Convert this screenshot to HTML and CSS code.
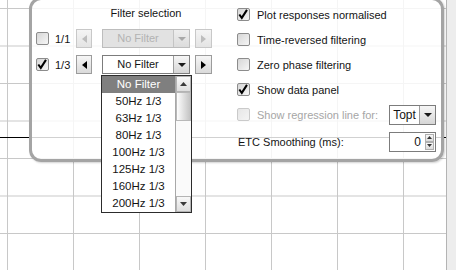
FILE: index.html
```html
<!DOCTYPE html>
<html lang="en">
<head>
  <meta charset="UTF-8">
  <title>Filter panel</title>
  <link rel="stylesheet" href="styles.css">
</head>
<body>
  <div class="screen">
    <div class="plot">
      <div class="panel">

        <div class="filters">
          <div class="filters-title">Filter selection</div>

          <div class="filter-row">
            <span class="check"></span>
            <span class="filter-label">1/1</span>
            <span class="step disabled">
              <svg width="5" height="8" viewBox="0 0 5 8"><path d="M5 0L0 4L5 8Z"/></svg>
            </span>
            <div class="combo disabled">
              <span class="combo-text">No Filter</span>
              <span class="combo-arrow">
                <svg width="8" height="4" viewBox="0 0 8 4"><path d="M0 0H8L4 4Z"/></svg>
              </span>
            </div>
            <span class="step next disabled">
              <svg width="5" height="8" viewBox="0 0 5 8"><path d="M0 0L5 4L0 8Z"/></svg>
            </span>
          </div>

          <div class="filter-row">
            <span class="check">
              <svg width="13" height="13" viewBox="0 0 13 13"><path d="M2.5 6.5L5.2 10.2L10.8 1.5" /></svg>
            </span>
            <span class="filter-label">1/3</span>
            <span class="step">
              <svg width="5" height="8" viewBox="0 0 5 8"><path d="M5 0L0 4L5 8Z"/></svg>
            </span>
            <div class="combo">
              <span class="combo-text">No Filter</span>
              <span class="combo-arrow">
                <svg width="8" height="4" viewBox="0 0 8 4"><path d="M0 0H8L4 4Z"/></svg>
              </span>
            </div>
            <span class="step next">
              <svg width="5" height="8" viewBox="0 0 5 8"><path d="M0 0L5 4L0 8Z"/></svg>
            </span>

            <div class="dropdown">
              <ul class="dropdown-items">
                <li class="selected">No Filter</li>
                <li>50Hz 1/3</li>
                <li>63Hz 1/3</li>
                <li>80Hz 1/3</li>
                <li>100Hz 1/3</li>
                <li>125Hz 1/3</li>
                <li>160Hz 1/3</li>
                <li>200Hz 1/3</li>
              </ul>
              <div class="list-scroll">
                <span class="scroll-btn">
                  <svg width="7" height="4" viewBox="0 0 7 4"><path d="M0 4L3.5 0L7 4Z"/></svg>
                </span>
                <span class="scroll-thumb"></span>
                <span class="scroll-track"></span>
                <span class="scroll-btn">
                  <svg width="7" height="4" viewBox="0 0 7 4"><path d="M0 0H7L3.5 4Z"/></svg>
                </span>
              </div>
            </div>
          </div>
        </div>

        <div class="options">
          <div class="opt">
            <span class="check">
              <svg width="13" height="13" viewBox="0 0 13 13"><path d="M2.5 6.5L5.2 10.2L10.8 1.5" /></svg>
            </span>
            <span class="opt-label">Plot responses normalised</span>
          </div>
          <div class="opt">
            <span class="check"></span>
            <span class="opt-label">Time-reversed filtering</span>
          </div>
          <div class="opt">
            <span class="check"></span>
            <span class="opt-label">Zero phase filtering</span>
          </div>
          <div class="opt">
            <span class="check">
              <svg width="13" height="13" viewBox="0 0 13 13"><path d="M2.5 6.5L5.2 10.2L10.8 1.5" /></svg>
            </span>
            <span class="opt-label">Show data panel</span>
          </div>
          <div class="opt">
            <span class="check disabled"></span>
            <span class="opt-label disabled">Show regression line for:</span>
            <div class="combo small">
              <span class="combo-text">Topt</span>
              <span class="combo-arrow">
                <svg width="8" height="4" viewBox="0 0 8 4"><path d="M0 0H8L4 4Z"/></svg>
              </span>
            </div>
          </div>
          <div class="opt etc">
            <span class="etc-label">ETC Smoothing (ms):</span>
            <div class="spinner">
              <span class="spinner-value">0</span>
              <span class="spinner-btns">
                <span class="spin-btn">
                  <svg width="5" height="3" viewBox="0 0 5 3"><path d="M0 3L2.5 0L5 3Z"/></svg>
                </span>
                <span class="spin-btn">
                  <svg width="5" height="3" viewBox="0 0 5 3"><path d="M0 0H5L2.5 3Z"/></svg>
                </span>
              </span>
            </div>
          </div>
        </div>

      </div>
    </div>
    <div class="vscroll"></div>
  </div>
</body>
</html>
```

FILE: styles.css
```css
* {
  box-sizing: border-box;
}

body {
  margin: 0;
  font-family: "Liberation Sans", Arial, sans-serif;
  font-size: 11px;
  color: #141414;
  background: #fff;
}

.screen {
  display: flex;
  width: 456px;
  height: 270px;
  overflow: hidden;
}

/* chart area with grid and trace */
.plot {
  flex: 1;
  background-color: #fff;
  background-image:
    linear-gradient(#000, #000),
    linear-gradient(to right, #c8c8c8 1px, transparent 1px),
    linear-gradient(to bottom, #c8c8c8 1px, transparent 1px);
  background-size: 100% 1px, 66px 100%, 100% 37.5px;
  background-position: 0 137px, 7px 0, 0 8px;
  background-repeat: no-repeat, repeat-x, repeat-y;
}

.vscroll {
  width: 10px;
  background: #ededed;
  border-left: 1px solid #b4b4b4;
}

.panel {
  display: flex;
  width: 415px;
  height: 165px;
  margin: -3px 0 0 29px;
  border: 3px solid #a4a4a4;
  border-radius: 12px;
  background: rgba(255, 255, 255, 0.82);
  box-shadow: 1px 1px 2px rgba(0, 0, 0, 0.18);
}

/* left: filter selection */
.filters {
  width: 201px;
  flex-shrink: 0;
  padding: 7px 0 0 4px;
}

.filters-title {
  width: 88px;
  margin: 0 0 9px 66px;
  text-align: center;
  line-height: 13px;
}

.filter-row {
  position: relative;
  display: flex;
  align-items: center;
  height: 19px;
}

.filter-row + .filter-row {
  margin-top: 7px;
}

.check {
  display: inline-flex;
  flex-shrink: 0;
  width: 13px;
  height: 13px;
  border: 1px solid #8c8c8c;
  border-radius: 2px;
  background: linear-gradient(135deg, #d6d6d6, #f6f6f6);
  overflow: visible;
}

.check svg {
  margin: -1px 0 0 -1px;
  fill: none;
  stroke: #000;
  stroke-width: 2.2;
}

.check.disabled {
  border-color: #cacaca;
  background: linear-gradient(135deg, #e6e6e6, #f4f4f4);
}

.filter-label {
  width: 27px;
  padding-left: 6px;
}

.step {
  display: flex;
  align-items: center;
  justify-content: center;
  width: 16px;
  height: 19px;
  border: 1px solid #9c9c9c;
  background: linear-gradient(#f6f6f6, #dadada);
  fill: #000;
}

.step.next {
  width: 17px;
  margin-left: 5px;
}

.step.disabled {
  border-color: #c8c8c8;
  background: linear-gradient(#f4f4f4, #e4e4e4);
  fill: #bdbdbd;
}

.combo {
  display: flex;
  width: 88px;
  height: 19px;
  margin-left: 10px;
  border: 1px solid #7c7c7c;
  background: #fff;
}

.combo-text {
  flex: 1;
  text-align: center;
  line-height: 17px;
}

.combo-arrow {
  display: flex;
  align-items: center;
  justify-content: center;
  width: 16px;
  border-left: 1px solid #9c9c9c;
  background: linear-gradient(#f6f6f6, #d6d6d6);
  fill: #1a1a1a;
}

.combo.disabled {
  border-color: #bdbdbd;
  background: #e2e2e2;
  color: #b2b2b2;
}

.combo.disabled .combo-arrow {
  border-left-color: #c4c4c4;
  background: linear-gradient(#eeeeee, #dcdcdc);
  fill: #a8a8a8;
}

.combo.small {
  width: 47px;
  height: 20px;
  margin-left: auto;
  font-size: 12px;
}

.combo.small .combo-text {
  line-height: 18px;
}

/* open list of the 1/3 combo */
.dropdown {
  position: absolute;
  left: 65px;
  top: 20px;
  display: flex;
  width: 91px;
  height: 138px;
  border: 1px solid #2c2c2c;
  background: #fff;
  z-index: 5;
}

.dropdown-items {
  flex: 1;
  margin: 0;
  padding: 0;
  list-style: none;
}

.dropdown-items li {
  height: 17px;
  line-height: 17px;
  text-align: center;
  font-size: 11.5px;
}

.dropdown-items li.selected {
  background: #7f7f7f;
  color: #fff;
}

.list-scroll {
  display: flex;
  flex-direction: column;
  width: 16px;
  border-left: 1px solid #a8a8a8;
}

.scroll-btn {
  display: flex;
  align-items: center;
  justify-content: center;
  height: 16px;
  border: 1px solid #b4b4b4;
  background: linear-gradient(#f8f8f8, #dedede);
  fill: #3a3a3a;
}

.scroll-thumb {
  height: 29px;
  border: 1px solid #b8b8b8;
  background: linear-gradient(to right, #fdfdfd, #c4c4c4);
}

.scroll-track {
  flex: 1;
  background: #fafafa;
}

/* right: options */
.options {
  flex: 1;
  padding: 2px 5px 0 4px;
}

.opt {
  display: flex;
  align-items: center;
  height: 25px;
}

.opt-label {
  margin-left: 7px;
}

.opt-label.disabled {
  color: #a6a6a6;
}

.opt.etc {
  margin-top: 2px;
}

.etc-label {
  margin-left: 1px;
}

.spinner {
  display: flex;
  width: 47px;
  height: 20px;
  margin-left: auto;
  border: 1px solid #7c7c7c;
  background: #fff;
  font-size: 12px;
}

.spinner-value {
  flex: 1;
  text-align: right;
  line-height: 18px;
  padding-right: 4px;
}

.spinner-btns {
  display: flex;
  flex-direction: column;
  width: 9px;
  margin: 1px 1px 1px 0;
}

.spin-btn {
  display: flex;
  flex: 1;
  align-items: center;
  justify-content: center;
  border: 1px solid #b0b0b0;
  background: linear-gradient(#f8f8f8, #dcdcdc);
  fill: #333;
}
```
